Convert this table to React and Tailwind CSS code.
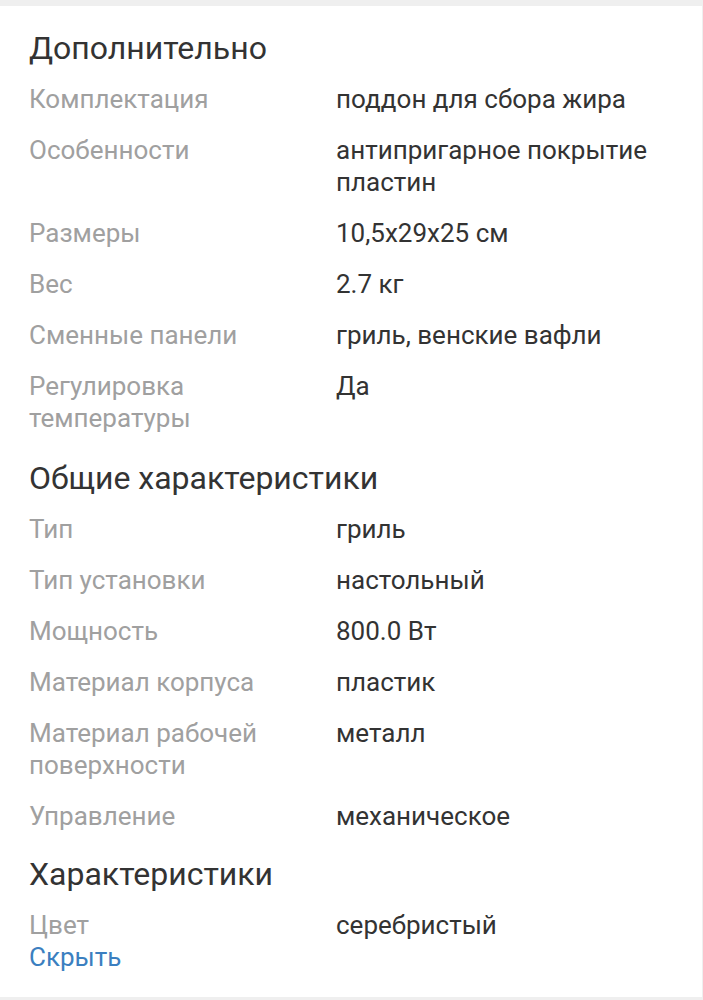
import React from "react";

const sections = [
  {
    title: "Дополнительно",
    mt: "",
    rows: [
      ["Комплектация", "поддон для сбора жира"],
      ["Особенности", "антипригарное покрытие пластин"],
      ["Размеры", "10,5x29x25 см"],
      ["Вес", "2.7 кг"],
      ["Сменные панели", "гриль, венские вафли"],
      ["Регулировка температуры", "Да"],
    ],
  },
  {
    title: "Общие характеристики",
    mt: "mt-[26px]",
    rows: [
      ["Тип", "гриль"],
      ["Тип установки", "настольный"],
      ["Мощность", "800.0 Вт"],
      ["Материал корпуса", "пластик"],
      ["Материал рабочей поверхности", "металл"],
      ["Управление", "механическое"],
    ],
  },
  {
    title: "Характеристики",
    mt: "mt-[24px]",
    rows: [["Цвет", "серебристый"]],
  },
];

export default function App() {
  return (
    <div
      className="w-[703px] h-[1000px] bg-[#efefef] pt-[6px] pb-[3px] pr-[1px]"
      style={{ fontFamily: "Roboto, 'Noto Sans', sans-serif" }}
    >
      <div className="bg-white h-full pt-[24px] pl-[29px] pr-[20px]">
        {sections.map((s) => (
          <div key={s.title} className={s.mt}>
            <div className="text-[32px] leading-[36px] text-[#333333] mb-[17px]">
              {s.title}
            </div>
            <div className="flex flex-col gap-[19px]">
              {s.rows.map(([k, v]) => (
                <div key={k} className="flex text-[26px] leading-[32px]">
                  <div className="w-[307px] pr-[20px] text-[#a0a0a0]">{k}</div>
                  <div className="flex-1 pr-[20px] text-[#333333]">{v}</div>
                </div>
              ))}
            </div>
          </div>
        ))}
        <div className="text-[26px] leading-[33px] text-[#3b7fc0]">Скрыть</div>
      </div>
    </div>
  );
}
